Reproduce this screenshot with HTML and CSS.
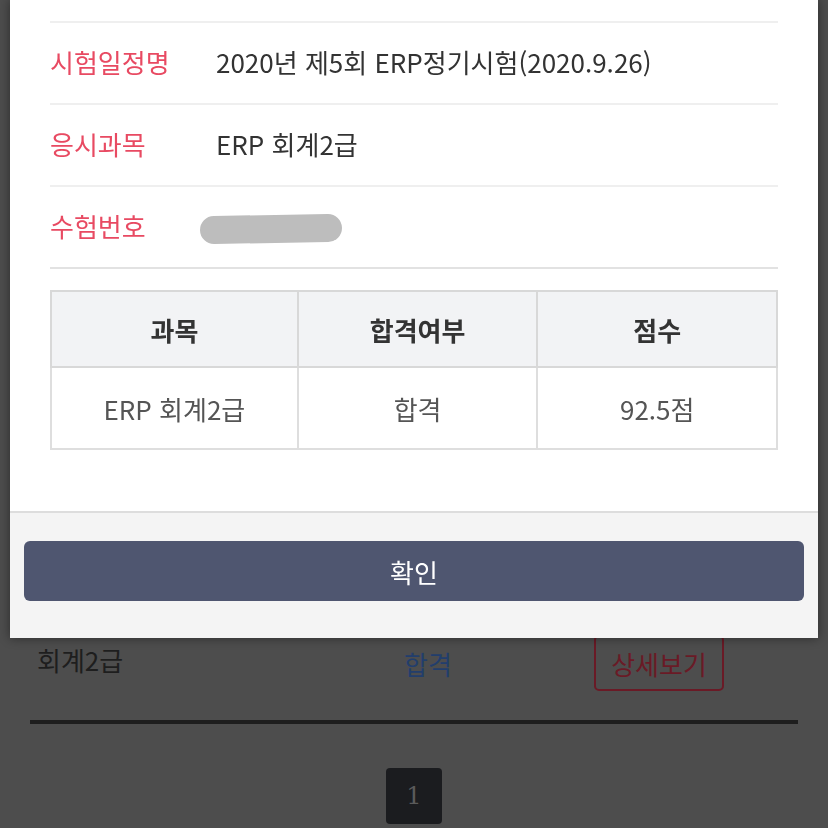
FILE: index.html
```html
<!DOCTYPE html>
<html lang="ko">
<head>
    <meta charset="UTF-8">
    <meta name="viewport" content="width=device-width, initial-scale=1.0">
    <title>합격 확인</title>
    <link rel="stylesheet" href="styles.css">
</head>
<body>
    <div class="page">
        <div class="result-list">
            <div class="result-row">
                <div class="result-subject">회계2급</div>
                <div class="result-pass">합격</div>
                <div class="result-action"><button class="detail-btn">상세보기</button></div>
            </div>
        </div>

        <div class="pagination">
            <span class="page-num">1</span>
        </div>
    </div>

    <div class="modal">
        <div class="modal-body">
            <div class="info-list">
                <div class="info-row">
                    <span class="info-label">시험일정명</span>
                    <span class="info-value">2020년 제5회 ERP정기시험(2020.9.26)</span>
                </div>
                <div class="info-row">
                    <span class="info-label">응시과목</span>
                    <span class="info-value">ERP 회계2급</span>
                </div>
                <div class="info-row">
                    <span class="info-label">수험번호</span>
                    <span class="info-value"><span class="masked"></span></span>
                </div>
            </div>

            <table class="score-table">
                <thead>
                    <tr>
                        <th class="col-subject">과목</th>
                        <th class="col-pass">합격여부</th>
                        <th class="col-score">점수</th>
                    </tr>
                </thead>
                <tbody>
                    <tr>
                        <td>ERP 회계2급</td>
                        <td>합격</td>
                        <td>92.5점</td>
                    </tr>
                </tbody>
            </table>
        </div>
        <div class="modal-footer">
            <button class="confirm-btn">확인</button>
        </div>
    </div>
</body>
</html>
```

FILE: styles.css
```css
body {
    margin: 0;
    background-color: #4d4d4d;
    font-family: "Noto Sans CJK KR", "Noto Sans", sans-serif;
    color: #1e1e1e;
    overflow: hidden;
}
.page {
    padding: 0 30px;
}
.result-list {
    padding-top: 606px;
    border-bottom: 4px solid #1e1e1e;
}
.result-row {
    display: grid;
    grid-template-columns: 310px 176px 1fr;
    align-items: center;
    height: 114px;
}
.result-subject {
    padding-left: 7px;
    font-size: 26px;
    margin-top: -8px;
}
.result-pass {
    text-align: center;
    font-size: 26px;
    color: #223e6c;
}
.result-action {
    text-align: center;
}
.detail-btn {
    font-family: inherit;
    font-size: 26px;
    color: #6a1a26;
    background: none;
    border: 2px solid #6a1a26;
    border-radius: 5px;
    width: 130px;
    height: 56px;
    padding: 0;
    margin-left: 4px;
}
.pagination {
    display: flex;
    justify-content: center;
    padding-top: 44px;
}
.page-num {
    display: flex;
    align-items: center;
    justify-content: center;
    width: 56px;
    height: 56px;
    border-radius: 4px;
    background-color: #1b1c1f;
    color: #5a5a5a;
    font-family: "DejaVu Serif", serif;
    font-size: 24px;
}

.modal {
    position: fixed;
    top: 0;
    left: 10px;
    width: 808px;
    background-color: white;
    box-shadow: 0 0 10px rgba(0, 0, 0, 0.45);
}
.modal-body {
    padding: 21px 40px 61px;
}
.info-list {
    border-bottom: 2px solid #e2e2e2;
}
.info-row {
    display: flex;
    align-items: center;
    height: 80px;
    border-top: 2px solid #efefef;
    font-size: 26px;
}
.info-label {
    width: 166px;
    margin-top: -3px;
    color: #e84a62;
}
.info-value {
    margin-top: -3px;
    color: #333;
}
.masked {
    display: block;
    width: 142px;
    height: 28px;
    margin-left: -16px;
    margin-top: 6px;
    border-radius: 14px;
    background-color: #bdbdbd;
    transform: rotate(-1deg);
}
.score-table {
    width: 100%;
    margin-top: 21px;
    border-collapse: collapse;
    table-layout: fixed;
    font-size: 26px;
}
.score-table th,
.score-table td {
    border: 2px solid #dedede;
    text-align: center;
    padding: 0;
}
.score-table th {
    height: 74px;
    background-color: #f2f3f5;
    font-weight: bold;
    color: #333;
    border-color: #d8d8d8;
}
.col-subject {
    width: 34%;
}
.col-pass {
    width: 33%;
}
.col-score {
    width: 33%;
}
.score-table td {
    height: 80px;
    color: #555;
}
.modal-footer {
    border-top: 2px solid #dddddd;
    background-color: #f4f4f4;
    padding: 28px 14px 37px;
}
.confirm-btn {
    display: block;
    width: 100%;
    height: 60px;
    border: none;
    border-radius: 6px;
    background-color: #4f5670;
    color: white;
    font-family: inherit;
    font-size: 26px;
}
```
